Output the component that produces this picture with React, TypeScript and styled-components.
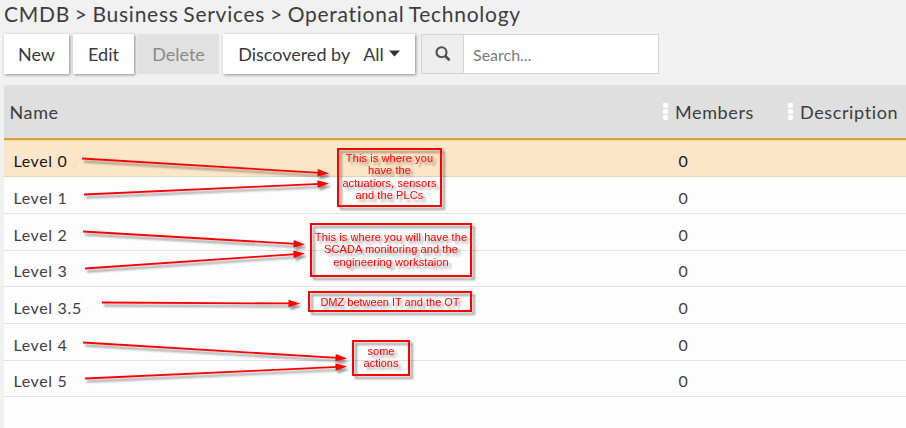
import React from 'react';
import styled, { createGlobalStyle, css } from 'styled-components';

const GlobalStyle = createGlobalStyle`
  * { box-sizing: border-box; }
  html, body { margin: 0; padding: 0; }
  body { background: #f1f1f1; overflow: hidden; }
`;

const Page = styled.main`
  position: relative;
  width: 906px;
  height: 428px;
  overflow: hidden;
  display: flex;
  flex-direction: column;
  padding-left: 4px;
  background: #f1f1f1;
  color: #3b3d40;
  font-family: Lato, 'Liberation Sans', sans-serif;
`;

const Breadcrumb = styled.h1`
  margin: 0;
  height: 34px;
  font-size: 21px;
  font-weight: 400;
  line-height: 28px;
  letter-spacing: 0.73px;
  word-spacing: -1.3px;
  white-space: nowrap;
`;

const Toolbar = styled.div`
  display: flex;
  height: 51px;
  align-items: flex-start;
`;

const ToolButton = styled.button<{ $width: number; $gap: number }>`
  flex: none;
  display: flex;
  align-items: center;
  justify-content: center;
  width: ${(p) => p.$width}px;
  height: 40px;
  margin: 0 ${(p) => p.$gap}px 0 0;
  padding: 0;
  border: 0;
  background: #fff;
  box-shadow: 1px 1px 3px rgba(0, 0, 0, 0.42);
  color: #38393c;
  font: 400 18px/24px Lato, sans-serif;
  white-space: nowrap;

  &:disabled {
    background: #e1e1e1;
    box-shadow: none;
    color: #8a8a8a;
  }
`;

const FilterValue = styled.span`
  margin-left: 13px;
`;

const Caret = styled.svg`
  width: 11px;
  height: 7px;
  margin: 0 0 1px 5px;
`;

const SearchGroup = styled.label`
  display: flex;
  width: 238px;
  height: 40px;
  border: 1px solid #d3d3d3;
  background: #fff;
`;

const SearchIconCell = styled.span`
  display: flex;
  width: 42px;
  padding: 11px 0 0 13px;
  border-right: 1px solid #d3d3d3;
  background: #eee;
`;

const SearchInput = styled.input`
  flex: 1;
  min-width: 0;
  border: 0;
  padding: 1px 0 0 9px;
  outline: 0;
  background: transparent;
  font: 400 16px/22px Lato, sans-serif;

  &::placeholder { color: #7a7a7a; opacity: 1; }
`;

const Grid = styled.section`
  flex: 1;
  background: #fdfdfd;
`;

const columns = css`
  display: grid;
  grid-template-columns: 657px 125px 1fr;
`;

const HeaderRow = styled.div`
  ${columns}
  height: 55px;
  background: #dfdfdf;
  border-bottom: 2px solid #d99e3e;
  border-top-left-radius: 2px;
`;

const HeaderCell = styled.div<{ $first?: boolean }>`
  display: flex;
  padding: 15px 0 0 ${(p) => (p.$first ? 5.5 : 5)}px;
  font-size: 18px;
  line-height: 24px;
  letter-spacing: 0.62px;
  white-space: nowrap;
`;

const Grip = styled.svg`
  flex: none;
  width: 5px;
  height: 18px;
  margin: 3px 7px 0 -3px;
`;

const Row = styled.div<{ $selected?: boolean; $height: number }>`
  ${columns}
  height: ${(p) => p.$height}px;
  border-bottom: 1px solid ${(p) => (p.$selected ? '#ded3bd' : '#e1e2e2')};
  background: ${(p) => (p.$selected ? '#fde6c8' : '#fdfdfd')};
  color: ${(p) => (p.$selected ? '#161616' : '#414144')};
  box-shadow: ${(p) => (p.$selected ? 'inset 0 1px #fbd98c' : 'none')};
`;

const Cell = styled.div<{ $indent: number }>`
  display: flex;
  align-items: flex-end;
  padding: 0 0 3px ${(p) => p.$indent}px;
  font-size: 16px;
  line-height: 24px;
  letter-spacing: 0.65px;
`;

const Arrows = styled.svg`
  position: absolute;
  inset: 0;
  pointer-events: none;
  filter: drop-shadow(2px 3px 1px rgba(0, 0, 0, 0.4));
`;

const Note = styled.div<{ $x: number; $y: number; $w: number; $h: number; $top: number; $spacing: number }>`
  position: absolute;
  left: ${(p) => p.$x}px;
  top: ${(p) => p.$y}px;
  width: ${(p) => p.$w}px;
  height: ${(p) => p.$h}px;
  padding-top: ${(p) => p.$top}px;
  border: 2px solid #f00;
  color: #f00;
  font: 11px/12.4px 'Liberation Sans', Arial, sans-serif;
  letter-spacing: ${(p) => p.$spacing}px;
  text-align: center;
  white-space: pre;
  filter: drop-shadow(3px 3px 1px rgba(0, 0, 0, 0.38));
`;

const rows = [
  { name: 'Level 0', height: 37 },
  { name: 'Level 1', height: 37 },
  { name: 'Level 2', height: 37 },
  { name: 'Level 3', height: 36 },
  { name: 'Level 3.5', height: 37 },
  { name: 'Level 4', height: 37 },
  { name: 'Level 5', height: 36 },
];

const arrows = [
  [82, 158.5, 329, 173.5],
  [84, 194.5, 329, 183.5],
  [83, 231.5, 305, 244.5],
  [85, 268.5, 305, 253.5],
  [102, 302.5, 300, 303.5],
  [83, 342.5, 347, 358.5],
  [85, 378.5, 347, 366.5],
];

const notes = [
  { x: 337, y: 148, w: 105, h: 59, top: 2, spacing: 0.1, text: 'This is where you\nhave the\nactuatiors, sensors\nand the PLCs' },
  { x: 310, y: 223, w: 162, h: 54, top: 6, spacing: 0.1, text: 'This is where you will have the\nSCADA monitoring and the\nengineering workstaion' },
  { x: 308, y: 291, w: 164, h: 21, top: 3, spacing: 0, text: 'DMZ between IT and the OT' },
  { x: 352, y: 340, w: 58, h: 36, top: 3, spacing: 0, text: 'some\nactions' },
];

const GripDots = () => (
  <Grip viewBox="0 0 5 18" fill="#fff">
    <rect y="0" width="5" height="5" rx="1" />
    <rect y="6" width="5" height="5" rx="1.5" />
    <rect y="12" width="5" height="5" rx="1.5" />
  </Grip>
);

const Arrow = ({ points: [x1, y1, x2, y2] }: { points: number[] }) => {
  const angle = (Math.atan2(y2 - y1, x2 - x1) * 180) / Math.PI;
  const length = Math.hypot(x2 - x1, y2 - y1);
  return (
    <g transform={`translate(${x1} ${y1}) rotate(${angle})`}>
      <path d={`M0 0H${length - 9}`} stroke="#f00" strokeWidth="1.8" />
      <path d={`M${length} 0l-11.5 -3.8v7.6z`} fill="#f00" />
    </g>
  );
};

export default function App() {
  return (
    <Page>
      <GlobalStyle />
      <Breadcrumb>CMDB &gt; Business Services &gt; Operational Technology</Breadcrumb>
      <Toolbar>
        <ToolButton $width={65} $gap={4}>New</ToolButton>
        <ToolButton $width={61} $gap={4}>Edit</ToolButton>
        <ToolButton $width={81} $gap={4} disabled>Delete</ToolButton>
        <ToolButton $width={192} $gap={6}>
          Discovered by<FilterValue>All</FilterValue>
          <Caret viewBox="0 0 11 7"><path d="M0 .5h11L5.5 6.5z" fill="#333" /></Caret>
        </ToolButton>
        <SearchGroup>
          <SearchIconCell>
            <svg width="16" height="16" viewBox="0 0 16 16" fill="none" stroke="#505050">
              <circle cx="6.5" cy="6.3" r="5" strokeWidth="2.1" />
              <path d="M10.2 10l4.4 4.3" strokeWidth="2.6" />
            </svg>
          </SearchIconCell>
          <SearchInput placeholder="Search..." />
        </SearchGroup>
      </Toolbar>
      <Grid>
        <HeaderRow>
          <HeaderCell $first>Name</HeaderCell>
          <HeaderCell><GripDots />Members</HeaderCell>
          <HeaderCell><GripDots />Description</HeaderCell>
        </HeaderRow>
        {rows.map((row, i) => (
          <Row key={row.name} $selected={i === 0} $height={row.height}>
            <Cell $indent={9.4}>{row.name}</Cell>
            <Cell $indent={17.4}>0</Cell>
          </Row>
        ))}
      </Grid>
      <Arrows width="906" height="428" viewBox="0 0 906 428">
        {arrows.map((points) => <Arrow key={points.join()} points={points} />)}
      </Arrows>
      {notes.map((n) => (
        <Note key={n.text} $x={n.x} $y={n.y} $w={n.w} $h={n.h} $top={n.top} $spacing={n.spacing}>{n.text}</Note>
      ))}
    </Page>
  );
}
